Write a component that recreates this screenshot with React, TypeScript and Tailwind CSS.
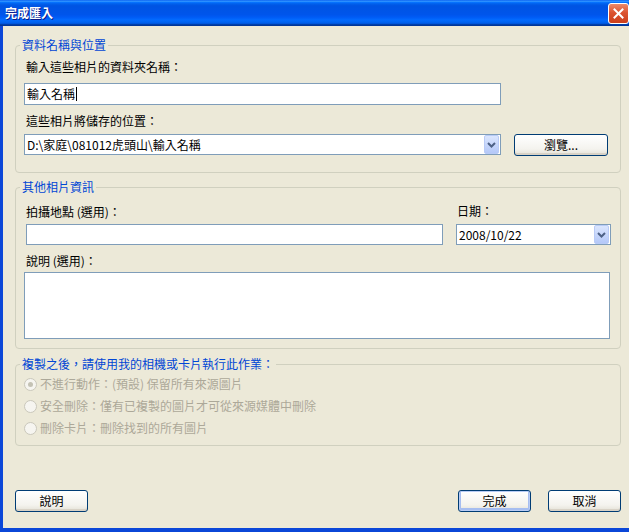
import React from "react"

const font = "font-['Noto_Sans_CJK_TC','Noto_Sans',sans-serif]"

function ComboArrow() {
  return (
    <div className="w-[15px] h-[19px] rounded-[2px] border border-[#b9cbf6] bg-[linear-gradient(to_bottom,#dbe6fe,#b4c8f8)] flex items-center justify-center">
      <svg width="9" height="6" viewBox="0 0 9 6">
        <path d="M1 1 L4.5 4.5 L8 1" fill="none" stroke="#4d6185" strokeWidth="2" />
      </svg>
    </div>
  )
}

function Combo({ text, width }: { text: string; width: string }) {
  return (
    <div className={`${width} h-[21px] border border-[#7f9db9] bg-white flex items-center justify-between pl-[2px] pr-[1px]`}>
      <span className="text-[12px] leading-none text-black whitespace-nowrap">{text}</span>
      <ComboArrow />
    </div>
  )
}

function XpButton({ label, width, isDefault }: { label: string; width: string; isDefault?: boolean }) {
  return (
    <button
      className={`${width} h-[22px] rounded-[3px] border border-[#003c74] bg-[linear-gradient(to_bottom,#ffffff,#f4f3ee_70%,#e4e1d6)] text-[12px] leading-none text-black ${
        isDefault
          ? "shadow-[inset_0_0_0_1px_#b8ccf5,inset_0_-1px_0_2px_#a6bdf0]"
          : "shadow-[inset_0_-2px_0_#d8d2c6]"
      }`}
    >
      {label}
    </button>
  )
}

function Radio({ label, checked }: { label: string; checked?: boolean }) {
  return (
    <div className="h-[22px] flex items-center gap-[3px]">
      <div className="w-[13px] h-[13px] rounded-full border border-[#cac8bb] bg-[#f6f5f0] flex items-center justify-center">
        {checked && <div className="w-[5px] h-[5px] rounded-full bg-[#c4c2b4]" />}
      </div>
      <span className="text-[12px] leading-[16px] text-[#aca899] whitespace-nowrap">{label}</span>
    </div>
  )
}

function Legend({ children }: { children: React.ReactNode }) {
  return (
    <legend className="ml-[-4px] px-[2px] text-[12px] leading-[16px] text-[#0046d5]">{children}</legend>
  )
}

export default function App() {
  return (
    <div className={`w-[629px] h-[532px] flex flex-col overflow-hidden ${font}`}>
      {/* title bar */}
      <div className="h-[26px] shrink-0 flex items-center justify-between pl-[5px] bg-[linear-gradient(to_bottom,#0058ee_0%,#3593ff_4%,#288eff_6%,#127dff_8%,#036ffc_10%,#0262ee_14%,#0057e5_20%,#0054e3_24%,#0055eb_56%,#005bf5_66%,#026afe_76%,#0062ef_86%,#0052d6_92%,#0040ab_94%,#003092_100%)]">
        <span className="text-[12px] font-bold leading-none text-white [text-shadow:1px_1px_0_#0a1a8a]">完成匯入</span>
        <div className="w-[21px] h-[21px] rounded-[3px] border border-white bg-[linear-gradient(to_bottom,#ec8a6b,#dc5330_45%,#cb3f1b)] flex items-center justify-center">
          <svg width="11" height="11" viewBox="0 0 11 11">
            <path d="M1.5 1.5 L9.5 9.5 M9.5 1.5 L1.5 9.5" stroke="white" strokeWidth="2" strokeLinecap="square" />
          </svg>
        </div>
      </div>

      {/* client area */}
      <div className="flex-1 flex flex-col border-l-[3px] border-b-[4px] border-[#0b47d8] bg-[#ece9d8] pl-[12px] text-black">
        <fieldset className="mt-[11px] w-[606px] h-[136px] border border-[#d0d0bf] rounded-[4px] pl-[8px]">
          <Legend>資料名稱與位置</Legend>
          <div className="mt-[6px] ml-[2px] text-[12px] leading-[16px]">輸入這些相片的資料夾名稱：</div>
          <div className="mt-[8px] w-[477px] h-[22px] border border-[#7f9db9] bg-white flex items-center pl-[2px]">
            <span className="text-[12px] leading-none">輸入名稱</span>
            <span className="w-[1px] h-[14px] bg-black ml-[1px]" />
          </div>
          <div className="mt-[8px] ml-[2px] text-[12px] leading-[16px]">這些相片將儲存的位置：</div>
          <div className="mt-[5px] flex gap-[13px]">
            <Combo text="D:\家庭\081012虎頭山\輸入名稱" width="w-[477px]" />
            <XpButton label="瀏覽..." width="w-[94px]" />
          </div>
        </fieldset>

        <fieldset className="mt-[6px] w-[606px] h-[170px] border border-[#d0d0bf] rounded-[4px] pl-[8px]">
          <Legend>其他相片資訊</Legend>
          <div className="flex gap-[13px]">
            <div className="ml-[2px] w-[417px] flex flex-col">
              <div className="mt-[9px] text-[12px] leading-[16px]">拍攝地點 (選用)：</div>
              <div className="mt-[4px] h-[21px] border border-[#7f9db9] bg-white" />
            </div>
            <div className="w-[155px] flex flex-col">
              <div className="mt-[8px] ml-[1px] text-[12px] leading-[16px]">日期：</div>
              <div className="mt-[5px]">
                <Combo text="2008/10/22" width="w-[155px]" />
              </div>
            </div>
          </div>
          <div className="mt-[8px] ml-[2px] text-[12px] leading-[16px]">說明 (選用)：</div>
          <div className="mt-[3px] w-[586px] h-[67px] border border-[#7f9db9] bg-white" />
        </fieldset>

        <fieldset className="mt-[7px] w-[606px] h-[90px] border border-[#d0d0bf] rounded-[4px] pl-[8px]">
          <Legend>複製之後，請使用我的相機或卡片執行此作業：</Legend>
          <div className="mt-[1px] flex flex-col">
            <Radio label="不進行動作：(預設) 保留所有來源圖片" checked />
            <Radio label="安全刪除：僅有已複製的圖片才可從來源媒體中刪除" />
            <Radio label="刪除卡片：刪除找到的所有圖片" />
          </div>
        </fieldset>

        <div className="mt-[44px] w-[606px] flex justify-between">
          <XpButton label="說明" width="w-[73px]" />
          <div className="flex gap-[17px]">
            <XpButton label="完成" width="w-[73px]" isDefault />
            <XpButton label="取消" width="w-[73px]" />
          </div>
        </div>
      </div>
    </div>
  )
}
